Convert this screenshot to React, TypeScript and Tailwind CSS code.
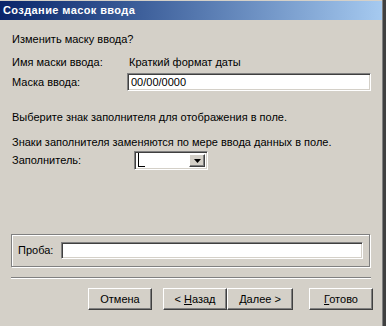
import React from "react";

const raised =
  "border border-t-white border-l-white border-r-[#404040] border-b-[#404040] shadow-[inset_-1px_-1px_0_#808080]";
const sunken =
  "border border-t-[#808080] border-l-[#808080] border-r-white border-b-white shadow-[inset_1px_1px_0_#404040,inset_-1px_-1px_0_#d4d0c8] bg-white";

function Btn({ children, className = "" }: { children: React.ReactNode; className?: string }) {
  return (
    <div className={`${raised} bg-[#d4d0c8] w-[64px] h-[22px] flex items-center justify-center ${className}`}>
      <span>{children}</span>
    </div>
  );
}

export default function App() {
  return (
    <div
      className="w-[386px] h-[326px] bg-[#404040] flex text-[11px] leading-[13px] text-black"
      style={{ fontFamily: '"Liberation Sans", Arial, sans-serif' }}
    >
      <div className="w-[383px] h-full bg-[#d4d0c8] border-r border-[#808080] flex flex-col">
        {/* Title bar */}
        <div className="mt-px h-[19px] bg-gradient-to-r from-[#0a246a] to-[#a6caf0] flex items-center pl-[3px]">
          <span className="text-white font-bold text-[11px] tracking-[0.4px]">Создание масок ввода</span>
        </div>

        <div className="pl-[12px] flex flex-col">
          <div className="mt-[13px]">Изменить маску ввода?</div>

          <div className="mt-[10px] flex">
            <div className="w-[117px]">Имя маски ввода:</div>
            <div>Краткий формат даты</div>
          </div>

          <div className="mt-[4px] flex items-center h-[18px]">
            <div className="w-[115px]">Маска ввода:</div>
            <div className={`${sunken} w-[244px] h-[18px] flex items-center pl-[3px]`}>00/00/0000</div>
          </div>

          <div className="mt-[20px]">Выберите знак заполнителя для отображения в поле.</div>
          <div className="mt-[12px]">Знаки заполнителя заменяются по мере ввода данных в поле.</div>

          <div className="mt-[2px] flex items-center h-[19px]">
            <div className="w-[122px]">Заполнитель:</div>
            <div className={`${sunken} w-[74px] h-[19px] flex items-center justify-between p-[2px]`}>
              <div className="flex items-end h-full pl-px">
                <div className="w-px h-[14px] bg-black" />
                <div className="w-[6px] h-px bg-black" />
              </div>
              <div className={`${raised} bg-[#d4d0c8] w-[16px] h-full flex items-center justify-center`}>
                <svg width="7" height="4" viewBox="0 0 7 4">
                  <path d="M0 0h7L3.5 4z" fill="#000" />
                </svg>
              </div>
            </div>
          </div>
        </div>

        {/* Proba group */}
        <div className="mt-[64px] ml-[11px] w-[359px] h-[33px] border border-[#808080] shadow-[inset_1px_1px_0_#fff,1px_1px_0_#fff] flex items-center pl-[6px] pr-[6px] gap-[8px]">
          <div>Проба:</div>
          <div className={`${sunken} flex-1 h-[17px]`} />
        </div>

        {/* Separator */}
        <div className="mt-[10px] ml-[11px] w-[360px] border-t border-[#808080] border-b border-b-white" />

        {/* Buttons */}
        <div className="mt-[9px] flex pl-[88px]">
          <Btn>Отмена</Btn>
          <Btn className="ml-[11px]">
            &lt; <u>Н</u>азад
          </Btn>
          <Btn className="w-[66px]">
            <u>Д</u>алее &gt;
          </Btn>
          <Btn className="ml-[16px]">
            <u>Г</u>отово
          </Btn>
        </div>
      </div>
    </div>
  );
}
